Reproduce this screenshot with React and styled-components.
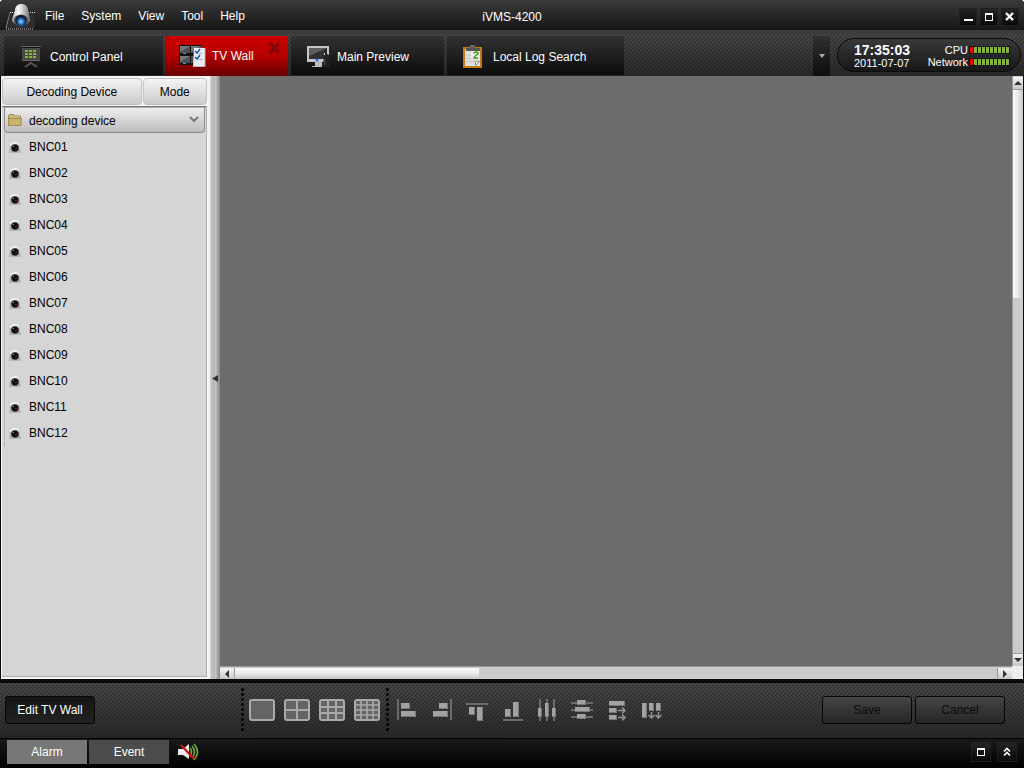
import React from "react";
import styled, { createGlobalStyle, css } from "styled-components";

const GlobalStyle = createGlobalStyle`
  *, *::before, *::after { box-sizing: border-box; }
  body { margin: 0; background: #fff; }
  body, button { font-family: "Liberation Sans", Arial, sans-serif; font-size: 12px; line-height: 16px; }
  button { margin: 0; padding: 0; border: 0; background: none; color: inherit; cursor: pointer; white-space: nowrap; }
  svg { display: block; flex: none; }
`;

const hatch = css`
  background-image:
    linear-gradient(135deg, #0000 25%, #0004 25%, #0004 50%, #0000 50%, #0000 75%, #0004 75%),
    linear-gradient(#4a4a4a, #2b2b2b);
  background-size: 4px 4px, 100% 100%;
`;

const Window = styled.div`
  display: flex;
  flex-direction: column;
  height: 100vh;
  overflow: hidden;
  background: #0a0a0a;
  border-radius: 4px 4px 0 0;
  color: #fff;
`;

/* Title bar */
const TitleBar = styled.header`
  display: grid;
  grid-template-columns: 1fr auto 1fr;
  flex: none;
  height: 30px;
  padding: 0 5px;
  background: linear-gradient(#3a3a3a, #161616);
`;
const TitleLeft = styled.div`
  display: flex;
  align-items: center;
  gap: 8px;
`;
const MenuBar = styled.nav`
  display: flex;
  gap: 17px;
  padding-top: 2px;
`;
const AppTitle = styled.h1`
  margin: 0;
  align-self: center;
  padding-top: 4px;
  font-size: 12px;
  font-weight: normal;
  line-height: 16px;
`;
const WindowButtons = styled.div`
  display: flex;
  justify-content: flex-end;
  gap: 3px;
  padding-top: 8px;
`;
const SquareButton = styled.button`
  display: flex;
  align-items: center;
  justify-content: center;
  width: ${(p) => p.$size || 18}px;
  height: ${(p) => p.$size || 18}px;
  border: 1px solid #1f1f1f;
  background: linear-gradient(#242424, #080808);
`;

/* Tab strip */
const TabStrip = styled.div`
  display: flex;
  flex: none;
  height: 46px;
  padding: 2px 3px 0 4px;
  border-top: 4px solid #3c3c3c;
  ${hatch}
`;
const TabList = styled.div`
  display: flex;
  flex: 1;
  gap: 3px;
`;
const Tab = styled.div`
  display: flex;
  position: relative;
  width: ${(p) => p.$width}px;
  height: ${(p) => (p.$active ? 40 : 39)}px;
  background: ${(p) => (p.$active ? "linear-gradient(#cd0000, #b40000 50%, #680000)" : "linear-gradient(#323232, #0c0c0c)")};
`;
const TabButton = styled.button`
  display: flex;
  flex: 1;
  align-items: center;
  gap: 5px;
  padding: ${(p) => (p.$active ? 0 : 2)}px 0 0 13px;
`;
const TabClose = styled.button`
  position: absolute;
  top: 6px;
  right: 6px;
  width: 14px;
  height: 13px;
`;
const TabOverflow = styled.button`
  display: flex;
  align-items: center;
  justify-content: center;
  width: 17px;
  margin-right: 7px;
  background: linear-gradient(#303030, #0c0c0c);
`;
const StatusPill = styled.div`
  display: flex;
  align-items: center;
  justify-content: space-between;
  width: 184px;
  height: 34px;
  margin-top: 2px;
  padding: 2px 10px 0 16px;
  border: 1px solid #0a0a0a;
  border-radius: 17px;
  background: linear-gradient(#3a3a3a, #171717);
`;
const Clock = styled.div`
  display: flex;
  flex-direction: column;
`;
const Time = styled.time`
  font-size: 14px;
  font-weight: bold;
  line-height: 13px;
`;
const DateText = styled.time`
  font-size: 11px;
  line-height: 12px;
`;
const Meters = styled.div`
  display: flex;
  flex-direction: column;
  align-items: flex-end;
`;
const MeterRow = styled.div`
  display: flex;
  align-items: center;
  font-size: 11px;
  line-height: 12px;
`;
const MeterBar = styled.span`
  display: flex;
  gap: 1px;
  height: 8px;
  margin-left: 1px;
  padding: 1px;
  background: #080808;
`;
const MeterCell = styled.i`
  width: 3px;
  background: ${(p) => (p.$hot ? "#f00" : "#85b53c")};
`;

/* Workspace */
const Workspace = styled.main`
  display: flex;
  flex: 1;
  min-height: 0;
  padding-right: 1px;
`;
const Sidebar = styled.aside`
  display: flex;
  flex: none;
  flex-direction: column;
  width: 209px;
  margin-left: 1px;
  padding: 2px 3px 2px 1px;
  background: #f4f4f4;
  color: #000;
`;
const SideTabs = styled.div`
  display: flex;
  flex: none;
  gap: 1px;
  padding-bottom: 1px;
`;
const SideTab = styled.button`
  flex: ${(p) => p.$grow} 1 0;
  height: 27px;
  border: 1px solid #c0c0c0;
  border-radius: 4px;
  background: linear-gradient(#f4f4f4, #cccbcb);
`;
const Tree = styled.section`
  flex: 1;
  padding: 0 1px 0 2px;
  border: 1px solid #b0b0b0;
  border-top-color: #777;
  border-width: 1px 1px 1px 0;
  background: #d6d5d5;
`;
const TreeHeader = styled.button`
  display: flex;
  align-items: center;
  gap: 6px;
  width: 100%;
  height: 26px;
  padding: 0 4px 0 2px;
  border: 1px solid #8c8c8c;
  border-top-color: #aaa;
  border-radius: 0 0 4px 4px;
  background: linear-gradient(#eeeeee, #bdbdbd);

  span { flex: 1; padding-top: 1px; text-align: left; }
`;
const DeviceList = styled.ul`
  margin: 0;
  padding: 1px 0 0;
  border-left: 1px dotted #999;
  list-style: none;
`;
const Device = styled.button`
  display: flex;
  align-items: center;
  gap: 7px;
  width: 100%;
  height: 26px;
  padding-left: 3px;
`;
const Splitter = styled.button`
  display: flex;
  align-items: center;
  justify-content: center;
  flex: none;
  width: 10px;
  background: linear-gradient(90deg, #d0d0d0, #b4b4b4 40%, #c2c2c2 55%, #858585);
`;
const Canvas = styled.section`
  display: grid;
  flex: 1;
  grid-template-columns: 1fr 11px;
  grid-template-rows: 1fr 13px;
  background: #6c6c6c;
`;
const Corner = styled.div`
  background: #eee;
`;
const Scrollbar = styled.div`
  display: flex;
  flex-direction: ${(p) => (p.$vertical ? "column" : "row")};
  padding-top: 1px;
  background: #cccbcb;
  border: solid #999;
  border-width: ${(p) => (p.$vertical ? "0 0 0 1px" : "1px 0 0")};
`;
const ScrollButton = styled.button`
  display: flex;
  align-items: center;
  justify-content: center;
  flex: 0 0 ${(p) => (p.$vertical ? 13 : 15)}px;
  border: solid #999;
  border-width: ${(p) => (p.$vertical ? (p.$end ? "1px 0 0" : "0 0 1px") : p.$end ? "0 0 0 1px" : "0 1px 0 0")};
  background: linear-gradient(#f4f4f4, #c8c8c8);
`;
const Track = styled.div`
  display: flex;
  flex: 1;
  flex-direction: ${(p) => (p.$vertical ? "column" : "row")};
`;
const Thumb = styled.div`
  flex: 0 0 ${(p) => (p.$vertical ? 37 : 32)}%;
  background: linear-gradient(${(p) => (p.$vertical ? "90deg" : "180deg")}, #fafafa, #eeeeee 40%, #c8c8c8);
`;

/* Toolbar */
const Toolbar = styled.div`
  display: flex;
  align-items: center;
  flex: none;
  height: 59px;
  padding: 0 19px 2px 0;
  border-top: 4px solid #0b0b0b;
  ${hatch}
`;
const ToolbarStart = styled.div`
  flex: none;
  width: 241px;
  padding-left: 5px;
`;
const PushButton = styled.button`
  width: 90px;
  height: 28px;
  border: 1px solid #050505;
  border-radius: 3px;
  background: ${(p) => (p.disabled ? "linear-gradient(#454545, #262626)" : "linear-gradient(#151515, #222)")};
  color: ${(p) => (p.disabled ? "#0a0a0a" : "#fff")};
  cursor: ${(p) => (p.disabled ? "default" : "pointer")};
`;
const Divider = styled.div`
  flex: none;
  width: 3px;
  height: 46px;
  background: radial-gradient(circle, #000 1px, #0000 2px) 0 0 / 3px 5px;
`;
const ToolGroup = styled.div`
  display: flex;
  gap: ${(p) => p.$gap}px;
  padding: 0 6px 0 ${(p) => p.$start}px;
`;
const ToolButton = styled.button`
  display: block;
`;
const ToolbarEnd = styled.div`
  display: flex;
  gap: 3px;
  margin-left: auto;
`;

/* Status bar */
const StatusBar = styled.footer`
  display: flex;
  align-items: center;
  flex: none;
  gap: 2px;
  height: 30px;
  padding: 0 7px 4px;
  border-top: 1px solid #000;
  background: linear-gradient(#191919, #000);
`;
const StatusTab = styled.button`
  width: 80px;
  height: 24px;
  background: ${(p) => (p.$active ? "#777" : "#4c4c4c")};
`;
const SoundButton = styled.button`
  margin-left: 7px;
`;
const StatusEnd = styled.div`
  display: flex;
  gap: 6px;
  margin-left: auto;
`;

const CameraLogo = () => (
  <svg width="32" height="30" viewBox="0 0 32 30">
    <defs>
      <linearGradient id="shell" x1="0" x2="1">
        <stop offset="0" stopColor="#aaa" />
        <stop offset=".35" stopColor="#fff" />
        <stop offset="1" stopColor="#777" />
      </linearGradient>
      <radialGradient id="lens" cx=".5" cy=".6">
        <stop offset="0" stopColor="#a8d8ff" />
        <stop offset=".45" stopColor="#2f7fd0" />
        <stop offset=".85" stopColor="#0a2750" />
        <stop offset="1" stopColor="#16191e" />
      </radialGradient>
    </defs>
    <path d="M8 12.500 5 13 1 28" fill="none" stroke="#888" />
    <path d="M5 13h24l1 15H2z" fill="#2d2d2d" />
    <path d="M5 12.500h25M1 29h28" stroke="#ddd" strokeDasharray="1 1" />
    <path d="M10 10c0-8 13-8 13 0l2 10c-2 7-16 7-18 0z" fill="url(#shell)" />
    <ellipse cx="16" cy="20.500" rx="7.500" ry="6" fill="#4b525c" />
    <circle cx="16" cy="20.500" r="5.500" fill="url(#lens)" />
  </svg>
);

const PanelIcon = () => (
  <svg width="28" height="24" viewBox="0 0 28 24">
    <path d="M4 1h20v2H4z" fill="#151515" />
    <path d="M5 3h18v13H5z" fill="#484848" />
    <path d="M4 1.500h20M5 15.500h18" stroke="#666" />
    <path d="M8 5h3v2H8zm4 0h3v2h-3zm4 0h3v2h-3zM8 8h3v2H8zm4 0h3v2h-3zm4 0h3v2h-3zM8 11h3v2H8zm4 0h3v2h-3zm4 0h3v2h-3z" fill="#7fb82c" />
    <path d="M14 17v1m-6 4 6-4 6 4" fill="none" stroke="#555" strokeWidth="2" />
  </svg>
);

const WallIcon = () => (
  <svg width="28" height="24" viewBox="0 0 28 24">
    <path d="M0 1h22v20H0z" fill="#111" />
    <path d="M1 2h10v7H1zm11 0h10v7H12zM1 12h10v7H1zm11 0h9v7h-9z" fill="#4f5052" />
    <path d="M1 2h10L1 8zm11 0h10l-10 6zM1 12h10L1 18z" fill="#74777a" />
    <path d="M4 9h3v1H4zm0 10h3v1H4z" fill="#359bff" />
    <path d="M15 4h11v19H14z" fill="#eceef4" />
    <path d="m16 7 2 2 3-4m-5 8 2 2 3-4" fill="none" stroke="#1753c2" strokeWidth="1.500" />
    <path d="M20 9.500h3m-3 6h4" stroke="#a3a3a8" />
    <path d="M26 4v18.500H14" fill="none" stroke="#bbb" />
  </svg>
);

const MonitorIcon = () => (
  <svg width="28" height="24" viewBox="0 0 28 24">
    <path d="M3 1h22v16H3z" fill="#c6c6c6" />
    <path d="M5 3h18v11H5z" fill="#303234" />
    <path d="M5 3h18L5 11z" fill="#5c5e60" />
    <path d="M11 17h7l1 4h3v1H8v-1h3z" fill="#bcbcbc" />
    <circle cx="13" cy="15" r="1.500" fill="#176eff" />
    <path d="M19 10h2V5h2v4l2 1v6l2 6h-9v-4l2-3z" fill="#222" />
    <path d="M20 8h1v2h-1z" fill="#ddd" />
    <path d="m19 14 2 1-1 5" fill="none" stroke="#555" />
  </svg>
);

const LogIcon = () => (
  <svg width="28" height="24" viewBox="0 0 28 24">
    <path d="M3 2h19v21H3z" fill="#c47a10" />
    <path d="M5 4h15v17H5z" fill="#dedede" />
    <path d="M6 3h14v3H6zM10 1h5v3h-5z" fill="#555" />
    <path d="M10 1h5" stroke="#999" />
    <path d="M6 10.500h5m-5 3h6m-6 3h9" stroke="#c6c6c6" />
    <path d="M11 6h8v8h-8z" fill="#eee" />
    <path d="M14 8.500c0-2 4-2 4 0 0 1.500-4 2-4 4.500h4" fill="none" stroke="#4a9e20" strokeWidth="1.500" />
    <path d="M15.500 20.500v-4h4z" fill="#fff" stroke="#999" />
  </svg>
);

const FolderIcon = () => (
  <svg width="16" height="14" viewBox="0 0 16 14">
    <path d="M1.500 12.500v-10l1-1h4l1 1.500h6v9.500z" fill="#d3c06d" stroke="#a8795c" />
    <path d="M1.500 5.500h13l-.5 7h-12z" fill="#c8b768" stroke="#a8875a" />
    <path d="M2 4.500h5l1-1h5" fill="none" stroke="#a9bf83" />
  </svg>
);

const DomeIcon = () => (
  <svg width="14" height="14" viewBox="0 0 14 14">
    <path d="M2 4c2-3 8-3 9 0l2 9H1z" fill="#b4b5b5" />
    <path d="M2 4c2-3 8-3 9 0v2H2z" fill="#eee" />
    <circle cx="7" cy="8" r="4" fill="#4a4e50" />
    <circle cx="7" cy="8" r="3" fill="#0a0a0a" />
    <path d="M5 6h1v1H5z" fill="#9ab" />
    <path d="M7 8h2v1H7z" fill="#7c2430" />
  </svg>
);

const GridIcon = ({ n }) => {
  const lines = Array.from({ length: n - 1 }, (_, i) => i + 1);
  return (
    <svg width="26" height="24" viewBox="0 0 26 24">
      <rect x="1" y="2" width="24" height="20" rx="2" fill="#646464" stroke="#a9a9a9" strokeWidth="2" />
      {lines.map((i) => (
        <path
          key={i}
          d={`M${Math.round(1 + (24 * i) / n)} 2v20M1 ${Math.round(2 + (20 * i) / n)}h24`}
          stroke="#a9a9a9"
          strokeWidth={n === 4 ? 1.6 : 2}
        />
      ))}
    </svg>
  );
};

/* Each drawing has its guide lines, its blocks as [x, y, width, height], and arrows. */
const ALIGN_TOOLS = [
  { name: "Align left", guides: "M2 1h2v21H2z", blocks: [[6, 5, 9, 6], [6, 13, 15, 6]] },
  { name: "Align right", guides: "M20 1h2v21h-2z", blocks: [[9, 5, 9, 6], [3, 13, 15, 6]] },
  { name: "Align top", guides: "M1 5h22v2H1z", blocks: [[4, 9, 6, 8], [12, 9, 6, 14]] },
  { name: "Align bottom", guides: "M3 21h20v2H3z", blocks: [[5, 11, 6, 8], [13, 4, 6, 15]] },
  { name: "Same height", guides: "M4 1h2v22H4zm7 0h2v22h-2zm7 0h2v22h-2z", blocks: [[3, 10, 4, 9], [10, 5, 4, 14], [17, 10, 4, 9]] },
  { name: "Same width", guides: "M1 4h22v2H1zm0 7h22v2H1zm0 7h22v2H1z", blocks: [[7, 2, 9, 5], [5, 9, 15, 5], [7, 16, 9, 5]] },
  { name: "Fill row", blocks: [[4, 3, 16, 5], [4, 10, 8, 5], [4, 17, 8, 5]], arrows: "M13 12.500h6m-2-3 3 3-3 3M13 19.500h6m-2-3 3 3-3 3" },
  { name: "Fill column", blocks: [[2, 5, 5, 15], [9, 5, 5, 8], [16, 5, 5, 8]], arrows: "M11.500 14v5m-3-2 3 3 3-3M18.500 14v5m-3-2 3 3 3-3" },
];

const AlignIcon = ({ guides, blocks, arrows }) => (
  <svg width="24" height="24" viewBox="0 0 24 24">
    {guides && <path d={guides} fill="#6b6b6b" />}
    {blocks.map(([x, y, w, h]) => (
      <g key={`${x}-${y}`}>
        <rect x={x} y={y} width={w} height={h} fill="#a2a2a2" />
        <path d={`M${x} ${y + h - 0.5}h${w - 0.5}V${y}`} fill="none" stroke="#777" />
      </g>
    ))}
    {arrows && <path d={arrows} fill="none" stroke="#959595" strokeWidth="1.500" />}
  </svg>
);

const Arrow = ({ d, color = "#333", size = 8 }) => (
  <svg width={size} height={size} viewBox="0 0 8 8">
    <path d={d} fill={color} />
  </svg>
);

const MaximizeIcon = () => (
  <svg width="10" height="10" viewBox="0 0 10 10">
    <path d="M1 1h8v8H1zm1 2v5h6V3z" fill="#fff" fillRule="evenodd" />
  </svg>
);

const SpeakerIcon = () => (
  <svg width="22" height="18" viewBox="0 0 22 18">
    <path d="M0 6h5l6-5v15l-6-4H0z" fill="#eee" />
    <path d="M12 5q3 4 0 8M14 3q5 6 0 12M16 1q7 8 0 16" fill="none" stroke="#72ad35" strokeWidth="1.600" />
    <path d="m3 2 13 14" stroke="#d01010" strokeWidth="2.200" />
  </svg>
);

const TABS = [
  { label: "Control Panel", width: 159, Icon: PanelIcon },
  { label: "TV Wall", width: 122, Icon: WallIcon, active: true },
  { label: "Main Preview", width: 153, Icon: MonitorIcon },
  { label: "Local Log Search", width: 177, Icon: LogIcon },
];
const DEVICES = Array.from({ length: 12 }, (_, i) => `BNC${String(i + 1).padStart(2, "0")}`);

const Meter = ({ label }) => (
  <MeterRow>
    {label}
    <MeterBar>
      {Array.from({ length: 10 }, (_, i) => (
        <MeterCell key={i} $hot={i === 0} />
      ))}
    </MeterBar>
  </MeterRow>
);

export default function App() {
  return (
    <Window>
      <GlobalStyle />
      <TitleBar>
        <TitleLeft>
          <CameraLogo />
          <MenuBar>
            {["File", "System", "View", "Tool", "Help"].map((m) => (
              <button key={m}>{m}</button>
            ))}
          </MenuBar>
        </TitleLeft>
        <AppTitle>iVMS-4200</AppTitle>
        <WindowButtons>
          <SquareButton aria-label="Minimize">
            <svg width="10" height="10" viewBox="0 0 10 10"><path d="M1 7h9v2H1z" fill="#fff" /></svg>
          </SquareButton>
          <SquareButton aria-label="Maximize"><MaximizeIcon /></SquareButton>
          <SquareButton aria-label="Close">
            <svg width="10" height="10" viewBox="0 0 10 10"><path d="m1 1 7 7m0-7-7 7" stroke="#fff" strokeWidth="2.400" /></svg>
          </SquareButton>
        </WindowButtons>
      </TitleBar>

      <TabStrip>
        <TabList>
          {TABS.map(({ label, width, Icon, active }) => (
            <Tab key={label} $width={width} $active={active}>
              <TabButton $active={active}><Icon />{label}</TabButton>
              {active && (
                <TabClose aria-label="Close tab">
                  <svg width="14" height="13" viewBox="0 0 14 13"><path d="m2 1 9 10m0-10L2 11" stroke="#7c0808" strokeWidth="3" /></svg>
                </TabClose>
              )}
            </Tab>
          ))}
        </TabList>
        <TabOverflow aria-label="More tabs"><Arrow d="M1 2h6L4 6z" color="#aaa" /></TabOverflow>
        <StatusPill>
          <Clock>
            <Time>17:35:03</Time>
            <DateText>2011-07-07</DateText>
          </Clock>
          <Meters>
            <Meter label="CPU" />
            <Meter label="Network" />
          </Meters>
        </StatusPill>
      </TabStrip>

      <Workspace>
        <Sidebar>
          <SideTabs>
            <SideTab $grow={141}>Decoding Device</SideTab>
            <SideTab $grow={64}>Mode</SideTab>
          </SideTabs>
          <Tree>
            <TreeHeader>
              <FolderIcon />
              <span>decoding device</span>
              <svg width="12" height="10" viewBox="0 0 12 10"><path d="m2 2 4 4 4-4" fill="none" stroke="#777" strokeWidth="2" /></svg>
            </TreeHeader>
            <DeviceList>
              {DEVICES.map((d) => (
                <li key={d}><Device><DomeIcon />{d}</Device></li>
              ))}
            </DeviceList>
          </Tree>
        </Sidebar>
        <Splitter aria-label="Collapse panel"><Arrow d="M7 1v7L1 4.500z" /></Splitter>
        <Canvas>
          <div />
          <Scrollbar $vertical>
            <ScrollButton $vertical aria-label="Scroll up"><Arrow d="M0 6h8L4 2z" /></ScrollButton>
            <Track $vertical><Thumb $vertical /></Track>
            <ScrollButton $vertical $end aria-label="Scroll down"><Arrow d="M0 2h8L4 6z" /></ScrollButton>
          </Scrollbar>
          <Scrollbar>
            <ScrollButton aria-label="Scroll left"><Arrow d="M6 0v8L2 4z" /></ScrollButton>
            <Track><Thumb /></Track>
            <ScrollButton $end aria-label="Scroll right"><Arrow d="M2 0v8l4-4z" /></ScrollButton>
          </Scrollbar>
          <Corner />
        </Canvas>
      </Workspace>

      <Toolbar>
        <ToolbarStart><PushButton>Edit TV Wall</PushButton></ToolbarStart>
        <Divider />
        <ToolGroup $gap={9} $start={5}>
          {[1, 2, 3, 4].map((n) => (
            <ToolButton key={n} aria-label={`${n} by ${n} layout`}><GridIcon n={n} /></ToolButton>
          ))}
        </ToolGroup>
        <Divider />
        <ToolGroup $gap={11} $start={6}>
          {ALIGN_TOOLS.map((t) => (
            <ToolButton key={t.name} aria-label={t.name}><AlignIcon {...t} /></ToolButton>
          ))}
        </ToolGroup>
        <ToolbarEnd>
          <PushButton disabled>Save</PushButton>
          <PushButton disabled>Cancel</PushButton>
        </ToolbarEnd>
      </Toolbar>

      <StatusBar>
        <StatusTab $active>Alarm</StatusTab>
        <StatusTab>Event</StatusTab>
        <SoundButton aria-label="Sound off"><SpeakerIcon /></SoundButton>
        <StatusEnd>
          <SquareButton $size={20} aria-label="Restore"><MaximizeIcon /></SquareButton>
          <SquareButton $size={20} aria-label="Expand">
            <svg width="10" height="10" viewBox="0 0 10 10"><path d="m2 4.500 3-3 3 3m-6 4 3-3 3 3" fill="none" stroke="#fff" strokeWidth="1.600" /></svg>
          </SquareButton>
        </StatusEnd>
      </StatusBar>
    </Window>
  );
}
